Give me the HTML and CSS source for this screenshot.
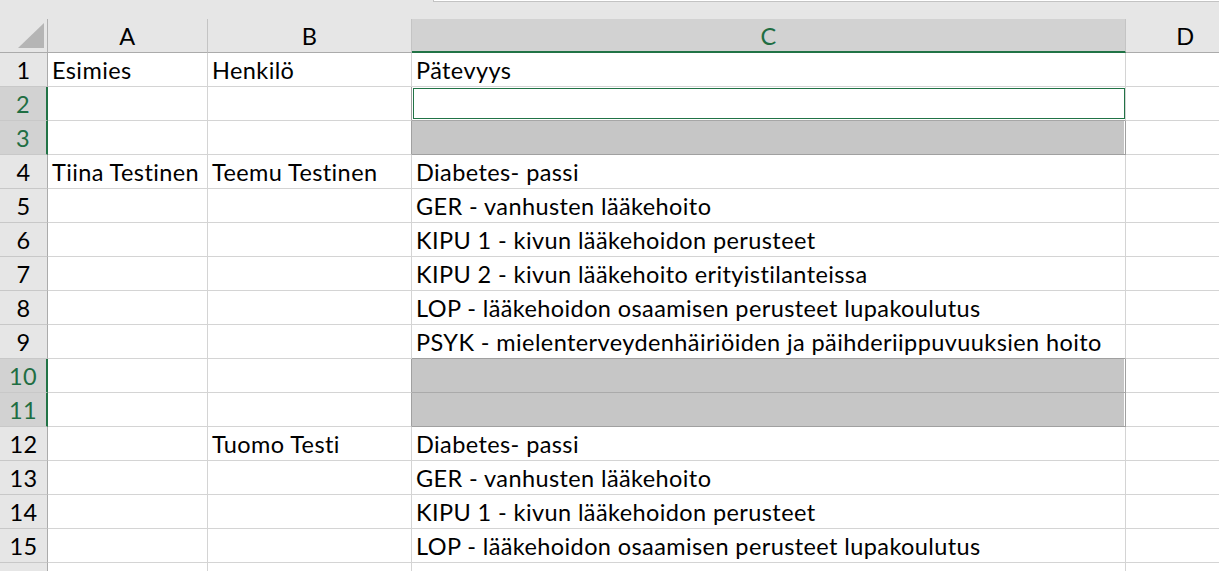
FILE: index.html
```html
<!DOCTYPE html>
<html lang="fi">
<head>
  <meta charset="UTF-8" />
  <title>Pätevyydet</title>
  <link rel="stylesheet" href="styles.css">
</head>
<body>

<div class="topbar">
  <div class="formula-edge"></div>
</div>

<div class="sheet">
  <!-- column headers -->
  <div class="corner"><svg width="48" height="33" viewBox="0 0 48 33"><polygon points="18,29 44,29 44,4" fill="#b5b5b5"/></svg></div>
  <div class="colhead">A</div>
  <div class="colhead">B</div>
  <div class="colhead active">C</div>
  <div class="colhead last">D</div>

  <div class="rowhead">1</div>
  <div class="cell">Esimies</div>
  <div class="cell">Henkilö</div>
  <div class="cell">Pätevyys</div>
  <div class="cell"></div>

  <div class="rowhead sel">2</div>
  <div class="cell"></div>
  <div class="cell edge"></div>
  <div class="cell current"><div class="cursor"></div></div>
  <div class="cell"></div>

  <div class="rowhead sel">3</div>
  <div class="cell"></div>
  <div class="cell edge"></div>
  <div class="cell range range-end"></div>
  <div class="cell"></div>

  <div class="rowhead">4</div>
  <div class="cell">Tiina Testinen</div>
  <div class="cell">Teemu Testinen</div>
  <div class="cell">Diabetes- passi</div>
  <div class="cell"></div>

  <div class="rowhead">5</div>
  <div class="cell"></div>
  <div class="cell"></div>
  <div class="cell">GER - vanhusten lääkehoito</div>
  <div class="cell"></div>

  <div class="rowhead">6</div>
  <div class="cell"></div>
  <div class="cell"></div>
  <div class="cell">KIPU 1 - kivun lääkehoidon perusteet</div>
  <div class="cell"></div>

  <div class="rowhead">7</div>
  <div class="cell"></div>
  <div class="cell"></div>
  <div class="cell">KIPU 2 - kivun lääkehoito erityistilanteissa</div>
  <div class="cell"></div>

  <div class="rowhead">8</div>
  <div class="cell"></div>
  <div class="cell"></div>
  <div class="cell">LOP - lääkehoidon osaamisen perusteet lupakoulutus</div>
  <div class="cell"></div>

  <div class="rowhead">9</div>
  <div class="cell"></div>
  <div class="cell"></div>
  <div class="cell range-above">PSYK - mielenterveydenhäiriöiden ja päihderiippuvuuksien hoito</div>
  <div class="cell"></div>

  <div class="rowhead sel">10</div>
  <div class="cell"></div>
  <div class="cell edge"></div>
  <div class="cell range"></div>
  <div class="cell"></div>

  <div class="rowhead sel">11</div>
  <div class="cell"></div>
  <div class="cell edge"></div>
  <div class="cell range range-end"></div>
  <div class="cell"></div>

  <div class="rowhead">12</div>
  <div class="cell"></div>
  <div class="cell">Tuomo Testi</div>
  <div class="cell">Diabetes- passi</div>
  <div class="cell"></div>

  <div class="rowhead">13</div>
  <div class="cell"></div>
  <div class="cell"></div>
  <div class="cell">GER - vanhusten lääkehoito</div>
  <div class="cell"></div>

  <div class="rowhead">14</div>
  <div class="cell"></div>
  <div class="cell"></div>
  <div class="cell">KIPU 1 - kivun lääkehoidon perusteet</div>
  <div class="cell"></div>

  <div class="rowhead">15</div>
  <div class="cell"></div>
  <div class="cell"></div>
  <div class="cell">LOP - lääkehoidon osaamisen perusteet lupakoulutus</div>
  <div class="cell"></div>

  <!-- row 16 only peeks in at the bottom -->
  <div class="rowhead"></div>
  <div class="cell"></div>
  <div class="cell"></div>
  <div class="cell"></div>
  <div class="cell"></div>
</div>

</body>
</html>
```

FILE: styles.css
```css
* { box-sizing: border-box; margin: 0; padding: 0; }
body {
  font-family: Lato, "Noto Sans", sans-serif;
  font-size: 23.5px;
  letter-spacing: 0.4px;
  color: #000;
  background: #fff;
  overflow: hidden;
}

/* strip above the column letters */
.topbar {
  height: 19px;
  background: #e6e6e6;
}
.formula-edge {
  margin-left: 433px;
  height: 2px;
  background: #fff;
  border-left: 1px solid #c3c3c3;
  border-bottom: 1px solid #c3c3c3;
}

/* column D runs on past the window edge */
.sheet {
  display: grid;
  grid-template-columns: 48px 160px 204px 714px 120px;
  grid-auto-rows: 34px;
}

.sheet > div {
  border-right: 1px solid #d4d4d4;
  border-bottom: 1px solid #d4d4d4;
  line-height: 33px;
  white-space: nowrap;
  overflow: visible;
}

.corner {
  background: #e6e6e6;
  border-right-color: #b0b0b0 !important;
  border-bottom-color: #ababab !important;
}
.corner svg { display: block; }

.colhead {
  background: #e6e6e6;
  text-align: center;
  padding-top: 1px;
  border-right-color: #c4c4c4 !important;
  border-bottom-color: #ababab !important;
}
.colhead.active {
  background: #d2d2d2;
  color: #1f6e43;
  border-bottom: 2px solid #217346 !important;
}

.rowhead {
  background: #e6e6e6;
  text-align: center;
  padding-top: 1px;
  border-right-color: #ababab !important;
  border-bottom-color: #c8c8c8 !important;
}
.rowhead.sel {
  background: #d2d2d2;
  color: #1f6e43;
  border-right: 2px solid #217346 !important;
}

.cell {
  padding: 1px 4px 0 4px;
}

/* selected ranges in column C */
.cell.edge { border-right-color: #a0a0a0 !important; }
.cell.current { padding: 1px 0 1px 1px; background: #fff; border-bottom-color: #a6a6a6 !important; }
.cursor { height: 31px; border: 1px solid #217346; }
.cell.range {
  background: #c6c6c6;
  border-right-color: #a0a0a0 !important;
  border-bottom-color: #aaaaaa !important;
  box-shadow: inset -1px 0 0 #fff;
}
.cell.range-end { border-bottom-color: #a0a0a0 !important; }
.cell.range-above { border-bottom-color: #a0a0a0 !important; }
```
